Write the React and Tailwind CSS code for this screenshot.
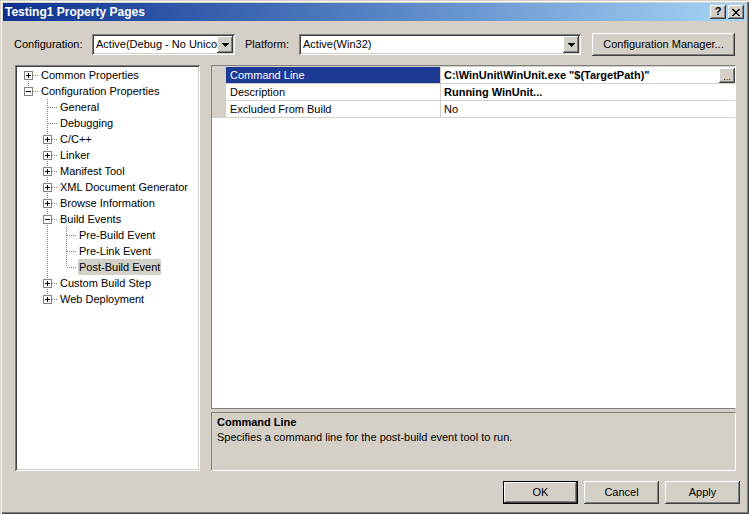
import React from 'react';

const raised =
  'shadow-[inset_-1px_-1px_0_#404040,inset_1px_1px_0_#ffffff,inset_-2px_-2px_0_#808080,inset_2px_2px_0_#d4d0c8]';
const sunken =
  'shadow-[inset_1px_1px_0_#808080,inset_-1px_-1px_0_#ffffff,inset_2px_2px_0_#404040,inset_-2px_-2px_0_#d4d0c8]';

const tree = [
  { label: 'Common Properties', level: 0, box: '+', first: true, next: true, rails: [] },
  { label: 'Configuration Properties', level: 0, box: '-', next: false, rails: [] },
  { label: 'General', level: 1, next: true, rails: [] },
  { label: 'Debugging', level: 1, next: true, rails: [] },
  { label: 'C/C++', level: 1, box: '+', next: true, rails: [] },
  { label: 'Linker', level: 1, box: '+', next: true, rails: [] },
  { label: 'Manifest Tool', level: 1, box: '+', next: true, rails: [] },
  { label: 'XML Document Generator', level: 1, box: '+', next: true, rails: [] },
  { label: 'Browse Information', level: 1, box: '+', next: true, rails: [] },
  { label: 'Build Events', level: 1, box: '-', next: true, rails: [] },
  { label: 'Pre-Build Event', level: 2, next: true, rails: [1] },
  { label: 'Pre-Link Event', level: 2, next: true, rails: [1] },
  { label: 'Post-Build Event', level: 2, next: false, rails: [1], selected: true },
  { label: 'Custom Build Step', level: 1, box: '+', next: true, rails: [] },
  { label: 'Web Deployment', level: 1, box: '+', next: false, rails: [] },
];

const props = [
  { name: 'Command Line', value: 'C:\\WinUnit\\WinUnit.exe "$(TargetPath)"', bold: true, selected: true },
  { name: 'Description', value: 'Running WinUnit...', bold: true },
  { name: 'Excluded From Build', value: 'No' },
];

const dot = { stroke: '#808080', strokeDasharray: '1 1', shapeRendering: 'crispEdges' };

function TreeLines({ level, rails, first, next, box }) {
  const w = 22 + 19 * level;
  const cx = 11 + 19 * level;
  return (
    <svg width={w} height={16} className="shrink-0">
      {rails.map((r) => (
        <line key={r} x1={11 + 19 * r + 0.5} y1={0} x2={11 + 19 * r + 0.5} y2={16} {...dot} />
      ))}
      {!first && <line x1={cx + 0.5} y1={0} x2={cx + 0.5} y2={8} {...dot} />}
      {next && <line x1={cx + 0.5} y1={8} x2={cx + 0.5} y2={16} {...dot} />}
      <line x1={cx + 1} y1={8.5} x2={w} y2={8.5} {...dot} />
      {box && (
        <g shapeRendering="crispEdges">
          <rect x={cx - 4 + 0.5} y={4.5} width={8} height={8} fill="#fff" stroke="#808080" />
          <line x1={cx - 2} y1={8.5} x2={cx + 3} y2={8.5} stroke="#000" />
          {box === '+' && <line x1={cx + 0.5} y1={6} x2={cx + 0.5} y2={11} stroke="#000" />}
        </g>
      )}
    </svg>
  );
}

function DownArrow() {
  return (
    <svg width="7" height="4" viewBox="0 0 7 4" shapeRendering="crispEdges">
      <polygon points="0,0 7,0 3.5,4" fill="#000" />
    </svg>
  );
}

function Combo({ width, text }) {
  return (
    <div className={`${width} h-[21px] bg-white ${sunken} flex items-center p-[2px]`}>
      <span className="flex-1 overflow-hidden whitespace-nowrap pl-[2px] leading-[17px]">{text}</span>
      <div className={`w-[16px] h-[17px] shrink-0 bg-[#d4d0c8] ${raised} flex items-center justify-center`}>
        <DownArrow />
      </div>
    </div>
  );
}

function Button({ children, width = 'w-[75px]', isDefault }) {
  return (
    <div className={`${width} h-[23px] ${isDefault ? 'border border-black' : ''}`}>
      <div className={`w-full h-full bg-[#d4d0c8] ${raised} flex items-center justify-center`}>{children}</div>
    </div>
  );
}

export default function App() {
  return (
    <div
      className={`w-[749px] h-[514px] bg-[#d4d0c8] flex flex-col text-[11px] text-black font-['Liberation_Sans',Arial,sans-serif] shadow-[inset_1px_1px_0_#d4d0c8,inset_2px_2px_0_#ffffff,inset_-1px_-1px_0_#404040,inset_-2px_-2px_0_#808080]`}
    >
      {/* Title bar */}
      <div className="mx-[3px] mt-[3px] h-[18px] bg-gradient-to-r from-[#10308f] to-[#a6d6f6] flex items-center pl-[2px] pr-[2px]">
        <span className="flex-1 text-white font-bold text-[12px]">Testing1 Property Pages</span>
        <div className={`w-[16px] h-[14px] bg-[#d4d0c8] ${raised} flex items-center justify-center`}>
          <span className="font-bold text-[11px] leading-[11px] -mt-[1px]">?</span>
        </div>
        <div className={`ml-[2px] w-[16px] h-[14px] bg-[#d4d0c8] ${raised} flex items-center justify-center`}>
          <svg width="8" height="7" viewBox="0 0 8 7" shapeRendering="crispEdges">
            <path d="M0 0h2v1h-2zM6 0h2v1h-2zM1 1h2v1h-2zM5 1h2v1h-2zM2 2h4v1h-4zM3 3h2v1h-2zM2 4h4v1h-4zM1 5h2v1h-2zM5 5h2v1h-2zM0 6h2v1h-2zM6 6h2v1h-2z" fill="#000" />
          </svg>
        </div>
      </div>

      {/* Configuration row */}
      <div className="mt-[12px] h-[23px] flex items-center pl-[14px]">
        <span className="w-[78px]">Configuration:</span>
        <Combo width="w-[143px]" text="Active(Debug - No Unicode)" />
        <span className="ml-[10px] w-[54px]">Platform:</span>
        <Combo width="w-[282px]" text="Active(Win32)" />
        <div className="ml-[11px]">
          <Button width="w-[143px]">Configuration Manager...</Button>
        </div>
      </div>

      {/* Main area */}
      <div className="mt-[9px] h-[406px] flex pl-[15px] pr-[13px] gap-[11px]">
        {/* Tree */}
        <div className={`w-[185px] bg-white ${sunken} p-[2px]`}>
          {tree.map((t) => (
            <div key={t.label} className="flex h-[16px] items-center">
              <TreeLines {...t} />
              <span
                className={`ml-[1px] px-[1px] h-[16px] leading-[16px] whitespace-nowrap ${t.selected ? 'bg-[#d4d0c8]' : ''}`}
              >
                {t.label}
              </span>
            </div>
          ))}
        </div>

        {/* Right side */}
        <div className="flex-1 flex flex-col">
          <div className="h-[344px] bg-white border border-t-[#808080] border-l-[#808080] border-r-white border-b-[#808080]">
            <div className="border-t border-[#d4d0c8]">
              {props.map((p) => (
                <div key={p.name} className="flex h-[17px]">
                  <div className="w-[14px] bg-[#d4d0c8]" />
                  <div
                    className={`w-[215px] border-r border-b border-[#d4d0c8] pl-[4px] leading-[16px] ${p.selected ? 'bg-[#1c3a94] text-white' : ''}`}
                  >
                    {p.name}
                  </div>
                  <div className={`flex-1 flex border-b border-[#d4d0c8] pl-[3px] leading-[16px] ${p.bold ? 'font-bold' : ''}`}>
                    <span className="flex-1 whitespace-nowrap">{p.value}</span>
                    {p.selected && (
                      <div className={`w-[16px] h-[15px] mt-[1px] bg-[#d4d0c8] ${raised} flex items-end justify-center`}>
                        <span className="text-[9px] leading-[10px] font-normal pb-[1px]">...</span>
                      </div>
                    )}
                  </div>
                </div>
              ))}
            </div>
          </div>
          <div className="mt-[3px] h-[59px] border border-t-[#808080] border-l-[#808080] border-r-white border-b-white pl-[5px] pt-[2px]">
            <div className="font-bold leading-[15px]">Command Line</div>
            <div className="leading-[15px]">Specifies a command line for the post-build event tool to run.</div>
          </div>
        </div>
      </div>

      {/* Buttons */}
      <div className="mt-[10px] h-[23px] flex justify-end gap-[6px] pr-[9px]">
        <Button isDefault>OK</Button>
        <Button>Cancel</Button>
        <Button>Apply</Button>
      </div>
    </div>
  );
}
